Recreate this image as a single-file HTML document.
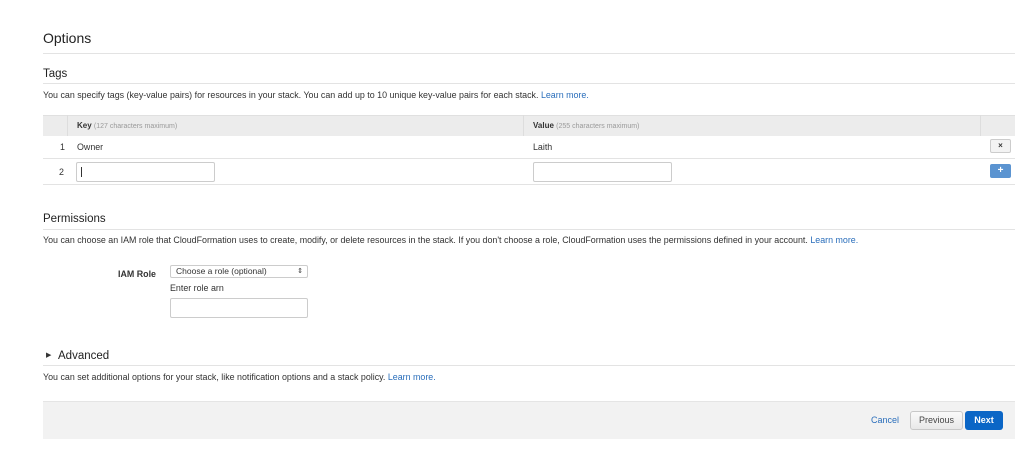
<!DOCTYPE html>
<html><head><style>
body{margin:0;width:1024px;height:458px;background:#fff;font-family:"Liberation Sans",sans-serif;color:#333;position:relative;overflow:hidden}
.a{position:absolute;white-space:nowrap}
.s{font-size:8.9px}
.ln{position:absolute;left:43px;width:972px;height:1px;background:#e3e3e3}
a{color:#2a6ebb;text-decoration:none}
.in{position:absolute;border:1px solid #ccc;border-radius:2px;background:#fff;box-sizing:border-box}
</style></head><body>
<div class="a" style="left:43px;top:30px;font-size:14px;color:#222">Options</div>
<div class="ln" style="top:53px"></div>
<div class="a" style="left:43px;top:68px;font-size:11.5px;color:#222">Tags</div>
<div class="ln" style="top:83px"></div>
<div class="a s" style="left:43px;top:90px">You can specify tags (key-value pairs) for resources in your stack. You can add up to 10 unique key-value pairs for each stack. <a>Learn more.</a></div>
<div style="position:absolute;left:43px;top:115px;width:972px;height:21px;background:#ececec;border-top:1px solid #e0e0e0;box-sizing:border-box"></div>
<div style="position:absolute;left:67px;top:115px;width:1px;height:21px;background:#ddd"></div>
<div style="position:absolute;left:523px;top:115px;width:1px;height:21px;background:#ddd"></div>
<div style="position:absolute;left:980px;top:115px;width:1px;height:21px;background:#ddd"></div>
<div class="a" style="left:77px;top:121px;font-size:8px"><b>Key</b> <span style="color:#999;font-size:7px">(127 characters maximum)</span></div>
<div class="a" style="left:533px;top:121px;font-size:8px"><b>Value</b> <span style="color:#999;font-size:7px">(255 characters maximum)</span></div>
<div class="a s" style="left:60px;top:142px">1</div>
<div class="a s" style="left:77px;top:142px">Owner</div>
<div class="a s" style="left:533px;top:142px">Laith</div>
<div style="position:absolute;left:990px;top:139px;width:21px;height:14px;border:1px solid #ccc;border-radius:2px;background:#f3f3f3;box-sizing:border-box;font-size:8px;text-align:center;line-height:12px;font-weight:bold">×</div>
<div class="ln" style="top:158px"></div>
<div class="a s" style="left:59px;top:167px">2</div>
<div class="in" style="left:76px;top:162px;width:139px;height:20px"><div style="position:absolute;left:4px;top:4px;width:1px;height:10px;background:#333"></div></div>
<div class="in" style="left:533px;top:162px;width:139px;height:20px"></div>
<div style="position:absolute;left:990px;top:164px;width:21px;height:14px;border-radius:2px;background:#5b94d1;color:#fff;font-size:10px;text-align:center;line-height:14px;font-weight:bold">+</div>
<div class="ln" style="top:184px"></div>
<div class="a" style="left:43px;top:213px;font-size:11.5px;color:#222">Permissions</div>
<div class="ln" style="top:229px"></div>
<div class="a s" style="left:43px;top:235px">You can choose an IAM role that CloudFormation uses to create, modify, or delete resources in the stack. If you don't choose a role, CloudFormation uses the permissions defined in your account. <a>Learn more.</a></div>
<div class="a s" style="left:118px;top:269px;font-weight:bold">IAM Role</div>
<div class="in" style="left:170px;top:265px;width:138px;height:13px;font-size:8.5px;padding-left:5px;line-height:11px">Choose a role (optional)<span style="position:absolute;right:4px;top:0;font-size:7px">⇕</span></div>
<div class="a s" style="left:170px;top:283px">Enter role arn</div>
<div class="in" style="left:170px;top:298px;width:138px;height:20px"></div>
<div class="a" style="left:46px;top:351px;font-size:7px">▶</div>
<div class="a" style="left:58px;top:350px;font-size:11.5px;color:#222">Advanced</div>
<div class="ln" style="top:365px"></div>
<div class="a s" style="left:43px;top:372px">You can set additional options for your stack, like notification options and a stack policy. <a>Learn more.</a></div>
<div style="position:absolute;left:43px;top:401px;width:972px;height:37px;background:#f2f2f2;border-top:1px solid #e5e5e5"></div>
<div class="a" style="left:871px;top:415px;font-size:9px;color:#2a6ebb">Cancel</div>
<div style="position:absolute;left:910px;top:411px;width:53px;height:19px;border:1px solid #c8c8c8;border-radius:3px;background:linear-gradient(#fafafa,#e8e8e8);box-sizing:border-box;font-size:9px;text-align:center;line-height:17px;color:#444">Previous</div>
<div style="position:absolute;left:965px;top:411px;width:38px;height:19px;border-radius:3px;background:#0b66c6;box-sizing:border-box;font-size:9px;text-align:center;line-height:19px;color:#fff;font-weight:bold">Next</div>
</body></html>
